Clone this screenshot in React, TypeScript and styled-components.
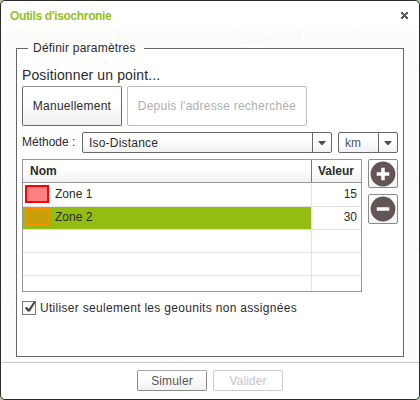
import React, { useState } from "react";
import styled, { createGlobalStyle } from "styled-components";

const GlobalStyle = createGlobalStyle`
  * { box-sizing: border-box; }
  body { margin: 0; background: #b9c6a4; font: 12px/14px "Liberation Sans", Arial, sans-serif; color: #2b2b2b; }
  button { font: inherit; padding: 0; margin: 0; }
`;

const Text = styled.span<{ $track?: number }>`
  letter-spacing: ${(p) => p.$track ?? 0}px;
  white-space: nowrap;
`;

const Dialog = styled.div`
  width: 420px;
  height: 400px;
  display: flex;
  flex-direction: column;
  border: 1px solid #2b2b2b;
  border-radius: 5px;
  background: #fff;
  overflow: hidden;
`;

const Header = styled.header`
  height: 30px;
  display: flex;
  align-items: center;
  justify-content: space-between;
  padding: 0 11px 1px 9px;
  color: #96c11f;
  font-weight: bold;
`;

const CloseButton = styled.button`
  display: flex;
  border: 0;
  background: none;
  color: #5f5f5f;
`;

const Body = styled.main`
  position: relative;
  height: 331px;
  padding: 17px 15px 5px;
  background: #fcfcfa;
`;

const MapTexture = styled.svg`
  position: absolute;
  inset: 0;
`;

const Panel = styled.section`
  position: relative;
  width: 388px;
  height: 309px;
  padding: 0 5px;
  border: 1px solid #666;
  background: #fff;
`;

const Legend = styled.h2`
  position: absolute;
  top: -8px;
  left: 11px;
  margin: 0;
  width: 116px;
  padding-left: 5px;
  font: inherit;
  line-height: 15px;
  background: linear-gradient(#fcfcfa 8px, #fff 8px);
`;

const Caption = styled.div`
  height: 37px;
  padding-top: 18px;
  font-size: 14px;
  line-height: 17px;
`;

const Row = styled.div<{ $gap: number; $height: number }>`
  display: flex;
  gap: ${(p) => p.$gap}px;
  height: ${(p) => p.$height}px;
`;

const Button = styled.button<{ $w: number; $h: number }>`
  width: ${(p) => p.$w}px;
  height: ${(p) => p.$h}px;
  display: flex;
  align-items: center;
  justify-content: center;
  border: 1px solid #696969;
  border-top-color: #929292;
  border-radius: 2px;
  background: linear-gradient(#fff 35%, #f1f1f1);
  color: #2b2b2b;
  &:disabled { border-color: #bdbdbd; background: #fff; color: #b0b0b0; }
`;

const ToolButton = styled(Button)`
  border-color: #8a8a8a;
`;

const FooterButton = styled(Button)`
  border-color: #8c8c8c;
  border-top-color: #aaa;
  color: #555;
  &:disabled { border-color: #ccc; color: #c6c6c6; }
`;

const Label = styled.label`
  width: 60px;
  padding-top: 3px;
`;

const Combo = styled.div<{ $w: number }>`
  width: ${(p) => p.$w}px;
  height: 21px;
  display: grid;
  grid-template-columns: 1fr 19px;
  border: 1px solid #696969;
  border-radius: 2px;
  background: linear-gradient(#fff 40%, #f1f1f1);
`;

const ComboValue = styled.div<{ $muted?: boolean }>`
  padding: 3px 0 0 6px;
  color: ${(p) => (p.$muted ? "#555" : "inherit")};
`;

const ComboArrow = styled.div`
  display: flex;
  align-items: center;
  justify-content: center;
  border-left: 1px solid #696969;
`;

const Grid = styled.div`
  width: 340px;
  height: 133px;
  border: 1px solid #969696;
  overflow: hidden;
`;

const GridHeader = styled.div`
  display: grid;
  grid-template-columns: 288px 50px;
  height: 23px;
  margin-bottom: 1px;
  border-bottom: 1px solid #969696;
  background: linear-gradient(#fff 40%, #f2f2f2);
  font-weight: bold;
`;

const HeadCell = styled.div<{ $pad: number; $ruled?: boolean }>`
  padding: 4px 0 0 ${(p) => p.$pad}px;
  border-left: ${(p) => (p.$ruled ? "1px solid #777" : "0")};
`;

const GridRow = styled.div`
  display: grid;
  grid-template-columns: 288px 50px;
  height: 23px;
`;

const NameCell = styled.div<{ $selected?: boolean }>`
  display: flex;
  align-items: flex-start;
  gap: 6px;
  padding: 1px 0 0 2px;
  border-bottom: 1px solid ${(p) => (p.$selected ? "#dce6c5" : "#e1e1e1")};
  background: ${(p) => (p.$selected ? "#93bd13" : "#fff")};
`;

const ValueCell = styled.div`
  padding: 3px 4px 0 0;
  text-align: right;
  border-left: 1px solid #e1e1e1;
  border-bottom: 1px solid #e1e1e1;
`;

const Swatch = styled.i<{ $line: string; $fill: string }>`
  width: 24px;
  height: 18px;
  border: 2px solid ${(p) => p.$line};
  background: ${(p) => p.$fill};
`;

const ZoneName = styled(Text)`
  padding-top: 2px;
`;

const Tools = styled.div`
  display: flex;
  flex-direction: column;
  gap: 6px;
`;

const CheckRow = styled.div`
  display: flex;
  gap: 4px;
  padding-top: 9px;
`;

const CheckBox = styled.button`
  width: 14px;
  height: 14px;
  border: 1px solid #777;
  background: #fafafa;
`;

const CheckMark = styled.svg`
  display: block;
  overflow: visible;
`;

const Footer = styled.footer`
  display: flex;
  justify-content: center;
  gap: 6px;
  height: 37px;
  padding-top: 7px;
  border-top: 1px solid #c9c9c9;
`;

const Arrow = () => (
  <svg width="8" height="4"><path d="M0.5 0H7.5V0.8L4.5 4H3.5L0.5 0.8Z" fill="#4d4d4d" /></svg>
);

const ToolIcon = ({ plus }: { plus?: boolean }) => (
  <svg width="26" height="26">
    <circle cx="13" cy="13" r="12.4" fill="#625555" />
    <path d={plus ? "M6.7 13H19.3M13 6.7V19.3" : "M6.7 13H19.3"} stroke="#fff" strokeWidth="3.5" />
  </svg>
);

const zones = [
  { name: "Zone 1", value: "15", line: "#f00", fill: "#ff8080" },
  { name: "Zone 2", value: "30", line: "#ff8c00", fill: "#c79f0a" },
  { name: "" }, { name: "" }, { name: "" },
] as { name: string; value?: string; line?: string; fill?: string }[];

export default function App() {
  const [checked, setChecked] = useState(true);
  const [selected, setSelected] = useState(1);
  return (
    <>
      <GlobalStyle />
      <Dialog>
        <Header>
          <Text $track={-0.36}>Outils d'isochronie</Text>
          <CloseButton aria-label="Fermer">
            <svg width="7" height="7" shapeRendering="crispEdges" fill="currentColor">
              <path d="M0 0H2V1H3V2H4V1H5V0H7V2H6V3H5V4H6V5H7V7H5V6H4V5H3V6H2V7H0V5H1V4H2V3H1V2H0Z" />
            </svg>
          </CloseButton>
        </Header>
        <Body>
          <MapTexture width="418" height="331" fill="none" stroke="#f5f5f3">
            <path d="M0 12L12 6L20 10L33 2L40 12M119 0Q113 9 122 17M233 0L235 12L260 10L284 5L296 3L306 17M299 5L294 17M353 0L360 9L368 17M389 13L405 5L418 0M0 73L11 79L14 68M404 31L411 39L418 35M404 145L411 151L418 147M0 148L12 156M0 260L10 268L12 280M404 213L412 220L418 217" />
            <circle cx="298" cy="3" r="2" />
          </MapTexture>
          <Panel>
            <Legend><Text $track={0.22}>Définir paramètres</Text></Legend>
            <Caption><Text $track={0.12}>Positionner un point...</Text></Caption>
            <Row $gap={5} $height={46}>
              <Button $w={100} $h={40}><Text $track={0.25}>Manuellement</Text></Button>
              <Button $w={180} $h={40} disabled><Text $track={0.25}>Depuis l'adresse recherchée</Text></Button>
            </Row>
            <Row $gap={0} $height={27}>
              <Label><Text $track={0}>Méthode :</Text></Label>
              <Row $gap={6} $height={21}>
                <Combo $w={250}>
                  <ComboValue><Text $track={0.2}>Iso-Distance</Text></ComboValue>
                  <ComboArrow><Arrow /></ComboArrow>
                </Combo>
                <Combo $w={60}>
                  <ComboValue $muted><Text>km</Text></ComboValue>
                  <ComboArrow><Arrow /></ComboArrow>
                </Combo>
              </Row>
            </Row>
            <Row $gap={6} $height={133}>
              <Grid>
                <GridHeader>
                  <HeadCell $pad={7}><Text>Nom</Text></HeadCell>
                  <HeadCell $pad={6} $ruled><Text>Valeur</Text></HeadCell>
                </GridHeader>
                {zones.map((z, i) => (
                  <GridRow key={i} onClick={() => z.name && setSelected(i)}>
                    <NameCell $selected={i === selected}>
                      {z.line && z.fill && <Swatch $line={z.line} $fill={z.fill} />}
                      <ZoneName>{z.name}</ZoneName>
                    </NameCell>
                    <ValueCell>{z.value}</ValueCell>
                  </GridRow>
                ))}
              </Grid>
              <Tools>
                <ToolButton $w={30} $h={29} aria-label="Ajouter"><ToolIcon plus /></ToolButton>
                <ToolButton $w={30} $h={30} aria-label="Supprimer"><ToolIcon /></ToolButton>
              </Tools>
            </Row>
            <CheckRow>
              <CheckBox role="checkbox" aria-checked={checked} aria-label="Utiliser seulement les geounits non assignées" onClick={() => setChecked(!checked)}>
                {checked && (
                  <CheckMark width="12" height="12"><path d="M1.7 5.7L4.2 5L5.7 7L10.5 0H12.8L6.8 9.6H4.7Z" fill="#444" /></CheckMark>
                )}
              </CheckBox>
              <Text $track={0.3}>Utiliser seulement les geounits non assignées</Text>
            </CheckRow>
          </Panel>
        </Body>
        <Footer>
          <FooterButton $w={70} $h={21}><Text $track={0.15}>Simuler</Text></FooterButton>
          <FooterButton $w={70} $h={21} disabled><Text $track={0.1}>Valider</Text></FooterButton>
        </Footer>
      </Dialog>
    </>
  );
}
